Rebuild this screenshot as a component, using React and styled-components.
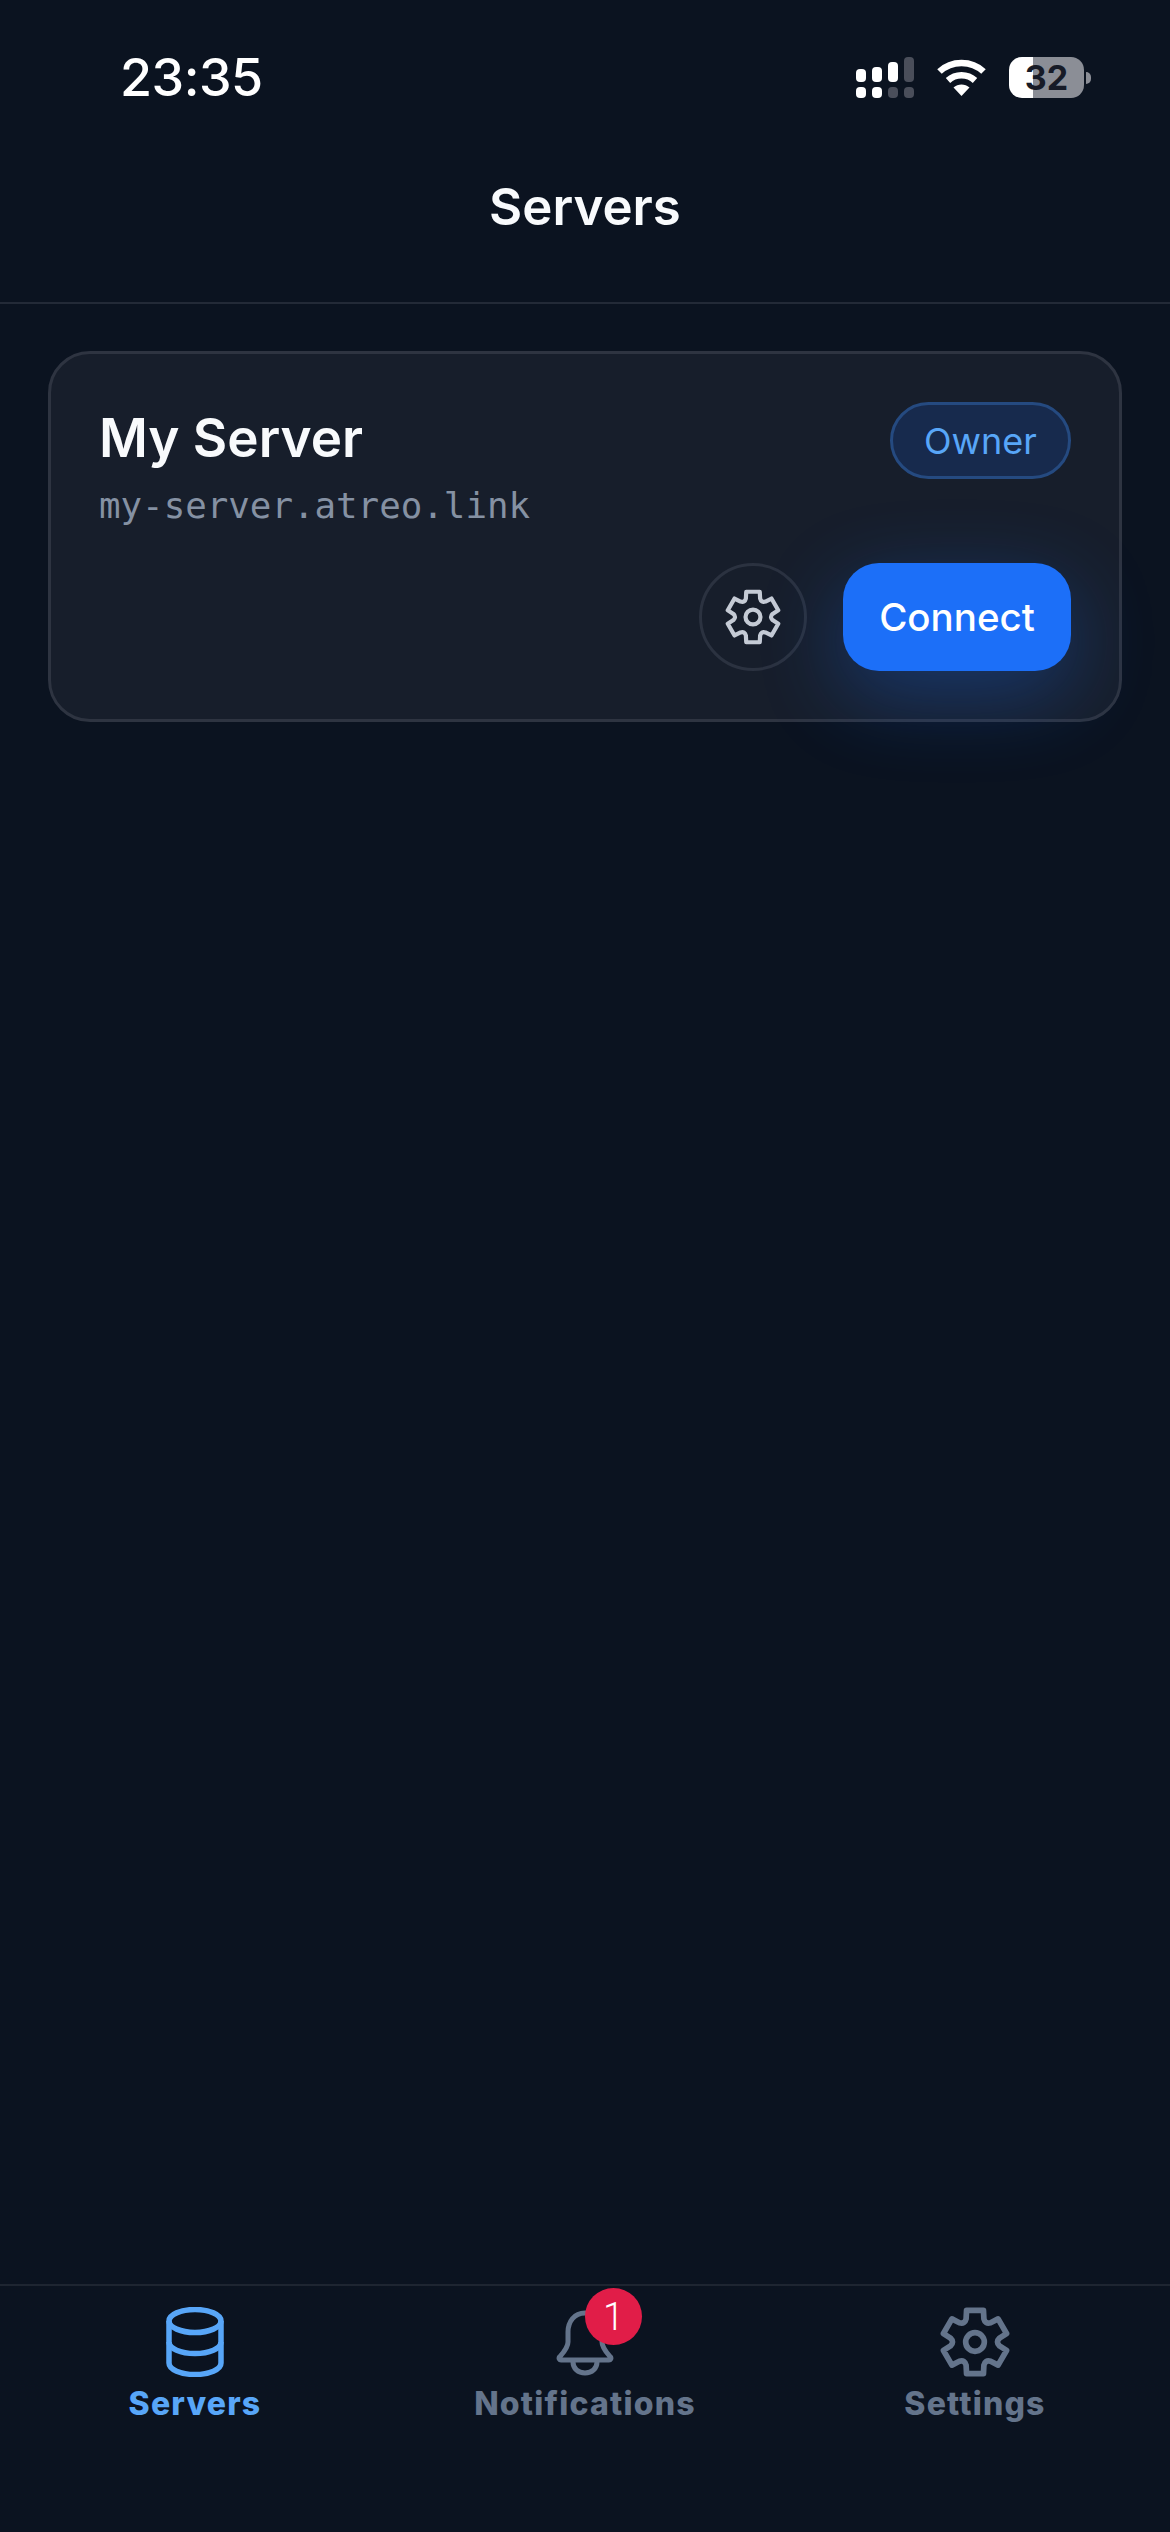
import React from "react";
import styled, { createGlobalStyle } from "styled-components";

const GlobalStyle = createGlobalStyle`
  html, body {
    margin: 0;
    padding: 0;
    background: #0b1320;
  }
  * {
    box-sizing: border-box;
  }
`;

const Screen = styled.div`
  display: flex;
  flex-direction: column;
  width: 1170px;
  height: 2532px;
  background: #0b1320;
  color: #fff;
  font-family: Inter, "Noto Sans", sans-serif;
  overflow: hidden;
`;

const Header = styled.header`
  height: 304px;
  flex-shrink: 0;
  border-bottom: 2px solid #232a37;
`;

const StatusBar = styled.div`
  display: flex;
  align-items: center;
  justify-content: space-between;
  height: 98px;
  padding: 57px 86px 0 120px;
`;

const Time = styled.span`
  font-size: 52px;
  font-weight: 500;
  line-height: 41px;
  letter-spacing: -0.5px;
`;

const StatusIcons = styled.div`
  display: flex;
  align-items: center;
  gap: 23px;
  height: 41px;
`;

const Battery = styled.div`
  position: relative;
  width: 75px;
  height: 41px;
  border-radius: 13px;
  background: linear-gradient(90deg, #fff 0 24px, #8b8e96 24px);
  color: #171b27;
  font-size: 34px;
  font-weight: 700;
  line-height: 41px;
  text-align: center;

  &::after {
    content: "";
    position: absolute;
    top: 15px;
    right: -7px;
    width: 5px;
    height: 12px;
    border-radius: 0 6px 6px 0;
    background: #8b8e96;
  }
`;

const Title = styled.h1`
  margin: 0;
  padding-top: 79px;
  font-size: 51px;
  font-weight: 600;
  line-height: 60px;
  text-align: center;
  color: #f8fafc;
`;

const Content = styled.main`
  flex: 1;
  padding: 47px 48px 0;
`;

const Card = styled.section`
  display: flex;
  flex-direction: column;
  justify-content: space-between;
  height: 371px;
  padding: 48px;
  border: 3px solid #2e3441;
  border-radius: 42px;
  background: #171e2b;
`;

const CardTop = styled.div`
  display: flex;
  align-items: flex-start;
  justify-content: space-between;
`;

const ServerName = styled.div`
  margin-top: 5px;
  font-size: 53px;
  font-weight: 600;
  line-height: 62px;
  color: #f8fafc;
`;

const ServerHost = styled.div`
  margin-top: 15px;
  font-family: "DejaVu Sans Mono", "Liberation Mono", monospace;
  font-size: 35.8px;
  line-height: 44px;
  color: #8591a3;
`;

const RoleBadge = styled.span`
  display: flex;
  align-items: center;
  justify-content: center;
  width: 181px;
  height: 77px;
  border: 3px solid #254a80;
  border-radius: 39px;
  background: #172a4d;
  color: #58a6f8;
  font-size: 36px;
  font-weight: 400;
`;

const CardActions = styled.div`
  display: flex;
  align-items: center;
  justify-content: flex-end;
  gap: 36px;
`;

const GearButton = styled.button`
  display: flex;
  align-items: center;
  justify-content: center;
  width: 108px;
  height: 108px;
  padding: 0;
  border: 3px solid #2b3240;
  border-radius: 50%;
  background: transparent;
  color: #c5cbd5;
`;

const ConnectButton = styled.button`
  width: 228px;
  height: 108px;
  padding: 0;
  border: 0;
  border-radius: 36px;
  background: #1c6ff8;
  box-shadow: 0 24px 84px rgba(28, 111, 248, 0.32);
  color: #fff;
  font-family: inherit;
  font-size: 38.5px;
  font-weight: 500;
`;

const TabBar = styled.nav`
  display: grid;
  grid-template-columns: repeat(3, 1fr);
  height: 248px;
  flex-shrink: 0;
  padding-top: 18px;
  border-top: 2px solid #1e2531;
`;

const Tab = styled.div`
  display: flex;
  flex-direction: column;
  align-items: center;
  color: ${(p) => (p.$active ? "#58a6f8" : "#64748b")};
`;

const TabIcon = styled.div`
  position: relative;
  display: flex;
  align-items: center;
  justify-content: center;
  width: 76px;
  height: 76px;
`;

const TabLabel = styled.span`
  margin-top: 2px;
  font-size: 32px;
  font-weight: 800;
  line-height: 44px;
  letter-spacing: 1.2px;
`;

const CountBadge = styled.span`
  position: absolute;
  top: -16px;
  left: 38px;
  display: flex;
  align-items: center;
  justify-content: center;
  width: 57px;
  height: 57px;
  border-radius: 50%;
  background: #e11d48;
  color: #fff;
  font-family: Roboto, sans-serif;
  font-size: 38px;
  font-weight: 300;
`;

function SignalIcon() {
  const bars = [
    { x: 0, y: 12, h: 13, on: true },
    { x: 16, y: 10, h: 15, on: true },
    { x: 32, y: 5, h: 20, on: true },
    { x: 48, y: 0, h: 25, on: false },
  ];
  const dots = [true, true, false, false];
  return (
    <svg width="58" height="41" viewBox="0 0 58 41">
      {bars.map((b) => (
        <rect key={b.x} x={b.x} y={b.y} width="10" height={b.h} rx="4" fill={b.on ? "#fff" : "#4a4e5a"} />
      ))}
      {dots.map((on, i) => (
        <rect key={i} x={i * 16} y="30" width="10" height="11" rx="4" fill={on ? "#fff" : "#4a4e5a"} />
      ))}
    </svg>
  );
}

function WifiIcon() {
  return (
    <svg width="49" height="37" viewBox="0 0 49 37" fill="none">
      <path d="M2.5 12.5C14.5 1 34.5 1 46.5 12.5" stroke="#fff" strokeWidth="6.5" strokeLinejoin="round" />
      <path d="M11 21.5C18.5 14.5 30.5 14.5 38 21.5" stroke="#fff" strokeWidth="6.5" />
      <path d="M24.5 37L16.5 28.5C21 24.6 28 24.6 32.5 28.5Z" fill="#fff" />
    </svg>
  );
}

// six teeth, flat on top and bottom: each tooth spans +-15deg, valleys sit at +-30deg
function gearPath() {
  const pt = (deg, r) => {
    const a = (deg * Math.PI) / 180;
    return `${(r * Math.sin(a)).toFixed(2)} ${(-r * Math.cos(a)).toFixed(2)}`;
  };
  let d = `M${pt(-15, 11.2)}`;
  for (let k = 0; k < 6; k++) {
    const c = k * 60;
    d += ` L${pt(c + 15, 11.2)} L${pt(c + 21, 8.5)} Q${pt(c + 30, 7.0)} ${pt(c + 39, 8.5)} L${pt(c + 45, 11.2)}`;
  }
  return d + "Z";
}

function GearIcon({ size, strokeWidth }) {
  return (
    <svg width={size} height={size} viewBox="-12 -12 24 24" fill="none" stroke="currentColor" strokeWidth={strokeWidth} strokeLinejoin="round">
      <path d={gearPath()} />
      <circle r="3.2" />
    </svg>
  );
}

function DatabaseIcon() {
  return (
    <svg width="58" height="70" viewBox="0 0 58 70" fill="none" stroke="currentColor" strokeWidth="5.5">
      <ellipse cx="29" cy="14" rx="26" ry="11.5" />
      <path d="M3 14V56C3 62.5 14.6 67.5 29 67.5S55 62.5 55 56V14" />
      <path d="M3 35C3 41.5 14.6 46.5 29 46.5S55 41.5 55 35" />
    </svg>
  );
}

function BellIcon() {
  return (
    <svg width="58" height="68" viewBox="0 0 58 68" fill="none" stroke="currentColor" strokeWidth="5" strokeLinejoin="round" strokeLinecap="round">
      <path d="M29 5C18 5 12 14 12 24V34C12 40 7 45 3.5 49C2.5 50.5 3.5 52 5 52H53C54.5 52 55.5 50.5 54.5 49C51 45 46 40 46 34V24C46 14 40 5 29 5Z" />
      <path d="M17 53V54C17 60.5 22 65 29 65S41 60.5 41 54V53" />
    </svg>
  );
}

export default function App() {
  return (
    <Screen>
      <GlobalStyle />
      <Header>
        <StatusBar>
          <Time>23:35</Time>
          <StatusIcons>
            <SignalIcon />
            <WifiIcon />
            <Battery>32</Battery>
          </StatusIcons>
        </StatusBar>
        <Title>Servers</Title>
      </Header>
      <Content>
        <Card>
          <CardTop>
            <div>
              <ServerName>My Server</ServerName>
              <ServerHost>my-server.atreo.link</ServerHost>
            </div>
            <RoleBadge>Owner</RoleBadge>
          </CardTop>
          <CardActions>
            <GearButton>
              <GearIcon size={56} strokeWidth={1.8} />
            </GearButton>
            <ConnectButton>Connect</ConnectButton>
          </CardActions>
        </Card>
      </Content>
      <TabBar>
        <Tab $active>
          <TabIcon>
            <DatabaseIcon />
          </TabIcon>
          <TabLabel>Servers</TabLabel>
        </Tab>
        <Tab>
          <TabIcon>
            <BellIcon />
            <CountBadge>1</CountBadge>
          </TabIcon>
          <TabLabel>Notifications</TabLabel>
        </Tab>
        <Tab>
          <TabIcon>
            <GearIcon size={70} strokeWidth={1.95} />
          </TabIcon>
          <TabLabel>Settings</TabLabel>
        </Tab>
      </TabBar>
    </Screen>
  );
}
